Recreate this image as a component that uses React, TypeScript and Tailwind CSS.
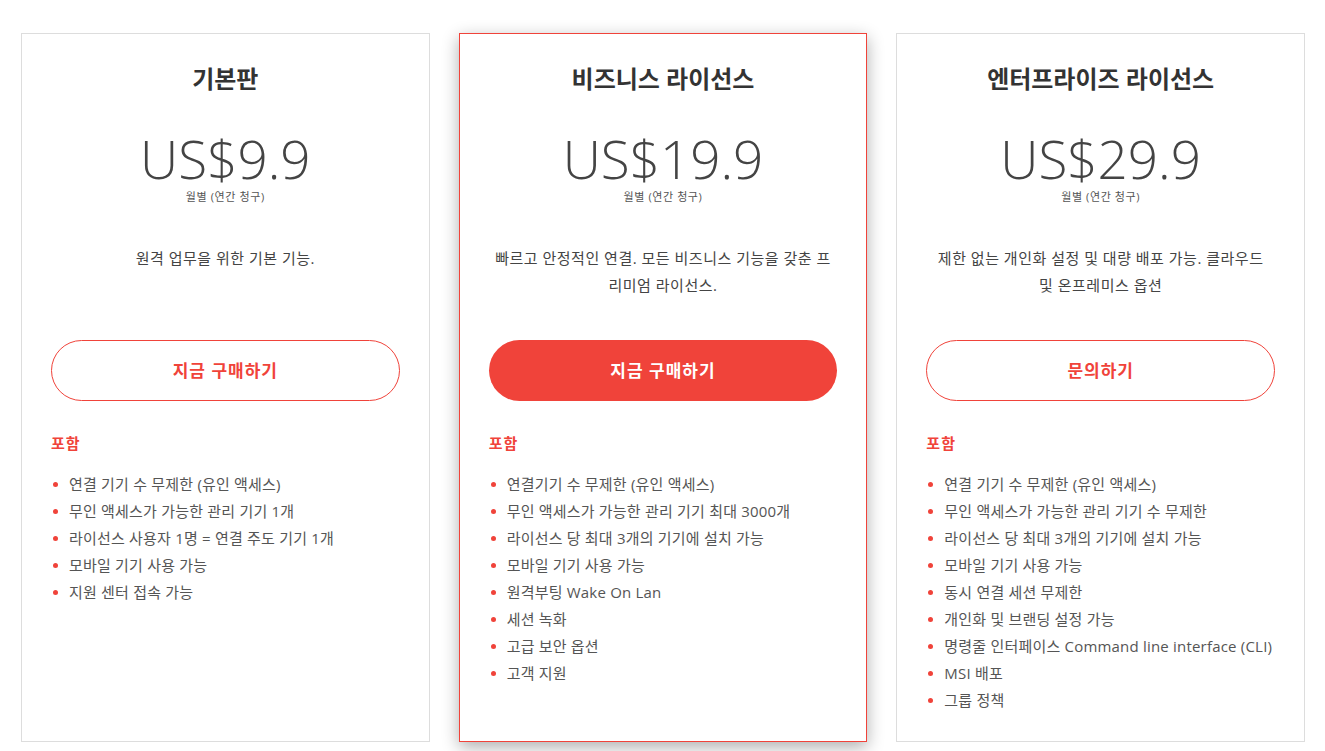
import React from 'react';

interface Plan {
  name: string;
  price: string;
  desc: string[];
  cta: string;
  featured?: boolean;
  features: string[];
}

const plans: Plan[] = [
  {
    name: '기본판',
    price: 'US$9.9',
    desc: ['원격 업무을 위한 기본 기능.'],
    cta: '지금 구매하기',
    features: [
      '연결 기기 수 무제한 (유인 액세스)',
      '무인 액세스가 가능한 관리 기기 1개',
      '라이선스 사용자 1명 = 연결 주도 기기 1개',
      '모바일 기기 사용 가능',
      '지원 센터 접속 가능',
    ],
  },
  {
    name: '비즈니스 라이선스',
    price: 'US$19.9',
    desc: ['빠르고 안정적인 연결. 모든 비즈니스 기능을 갖춘 프', '리미엄 라이선스.'],
    cta: '지금 구매하기',
    featured: true,
    features: [
      '연결기기 수 무제한 (유인 액세스)',
      '무인 액세스가 가능한 관리 기기 최대 3000개',
      '라이선스 당 최대 3개의 기기에 설치 가능',
      '모바일 기기 사용 가능',
      '원격부팅 Wake On Lan',
      '세션 녹화',
      '고급 보안 옵션',
      '고객 지원',
    ],
  },
  {
    name: '엔터프라이즈 라이선스',
    price: 'US$29.9',
    desc: ['제한 없는 개인화 설정 및 대량 배포 가능. 클라우드', '및 온프레미스 옵션'],
    cta: '문의하기',
    features: [
      '연결 기기 수 무제한 (유인 액세스)',
      '무인 액세스가 가능한 관리 기기 수 무제한',
      '라이선스 당 최대 3개의 기기에 설치 가능',
      '모바일 기기 사용 가능',
      '동시 연결 세션 무제한',
      '개인화 및 브랜딩 설정 가능',
      '명령줄 인터페이스 Command line interface (CLI)',
      'MSI 배포',
      '그룹 정책',
    ],
  },
];

const PlanCard: React.FC<{ plan: Plan }> = ({ plan }) => {
  return (
    <div
      className={
        plan.featured
          ? 'flex flex-col bg-white border border-[#f0433a] pt-[31px] px-[29px] pb-[27px] shadow-[0_5px_16px_rgba(0,0,0,0.32)]'
          : 'flex flex-col bg-white border border-[#dddddd] pt-[31px] px-[29px] pb-[27px]'
      }
    >
      <h3 className="text-center text-[24px] leading-[28px] font-bold text-[#333333]">{plan.name}</h3>
      <div className="mt-[40px] text-center text-[53px] leading-[52px] font-light text-[#444444]">{plan.price}</div>
      <div className="mt-[5px] text-center text-[11px] leading-[14px] tracking-[0.6px] text-[#555555]">월별 (연간 청구)</div>
      <p className="mt-[41px] h-[54px] text-center text-[15px] leading-[27px] tracking-[0.5px] text-[#444444]">
        {plan.desc.map((line, i) => (
          <span key={i} className="block">{line}</span>
        ))}
      </p>
      <button
        className={
          plan.featured
            ? 'mt-[41px] h-[61px] w-full rounded-full bg-[#f0433a] text-[17px] tracking-[1px] font-bold text-white'
            : 'mt-[41px] h-[61px] w-full rounded-full border border-[#f0433a] bg-white text-[17px] tracking-[1px] font-bold text-[#f0433a]'
        }
      >
        {plan.cta}
      </button>
      <div className="mt-[32px] text-[15px] leading-[20px] tracking-[1px] font-bold text-[#f0433a]">포함</div>
      <ul className="mt-[18px]">
        {plan.features.map((f) => (
          <li key={f} className="flex items-center whitespace-nowrap text-[15px] leading-[27px] tracking-[0.2px] text-[#555555]">
            <span className="ml-[2px] mr-[11px] h-[5px] w-[5px] shrink-0 rounded-full bg-[#f0433a]" />
            {f}
          </li>
        ))}
      </ul>
    </div>
  );
};

export default function App() {
  return (
    <div
      className="min-h-screen bg-white pt-[33px] pl-[21px] pr-[20px]"
      style={{ fontFamily: '"Open Sans", "Noto Sans CJK KR", sans-serif' }}
    >
      <div className="grid grid-cols-3 gap-[29px]">
        {plans.map((p) => (
          <PlanCard key={p.name} plan={p} />
        ))}
      </div>
    </div>
  );
}
